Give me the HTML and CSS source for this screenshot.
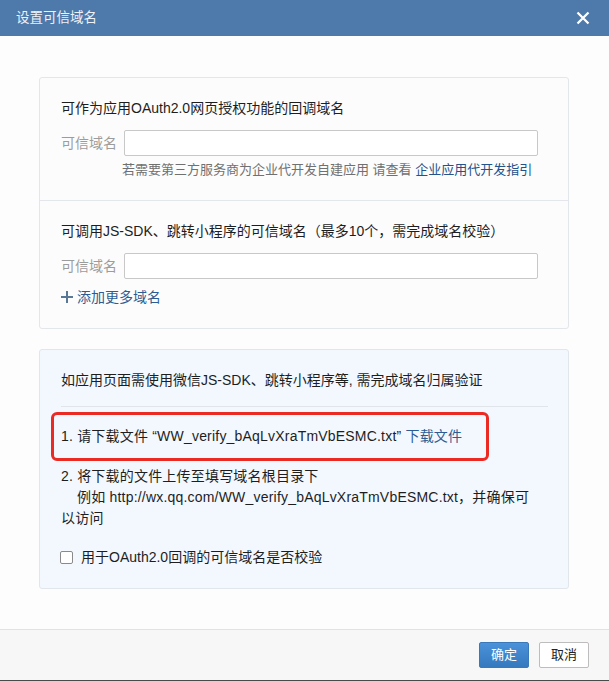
FILE: index.html
```html
<!DOCTYPE html>
<html lang="zh-CN">
<head>
<meta charset="utf-8">
<title>设置可信域名</title>
<link rel="stylesheet" href="styles.css">
</head>
<body>
<div class="dialog">
  <div class="header">
    <span class="title">设置可信域名</span>
    <span class="close">
      <svg width="14" height="14" viewBox="0 0 14 14"><path d="M1.5 1.5 L12.5 12.5 M12.5 1.5 L1.5 12.5" stroke="#fff" stroke-width="2.3" fill="none"/></svg>
    </span>
  </div>
  <div class="body">
    <div class="card">
      <div class="section">
        <div class="sec-title">可作为应用OAuth2.0网页授权功能的回调域名</div>
        <div class="field"><span class="label">可信域名</span><input class="input" type="text"></div>
        <div class="hint">若需要第三方服务商为企业代开发自建应用 请查看 <a class="link-dark">企业应用代开发指引</a></div>
      </div>
      <div class="section section-2">
        <div class="sec-title">可调用JS-SDK、跳转小程序的可信域名（最多10个，需完成域名校验）</div>
        <div class="field"><span class="label">可信域名</span><input class="input" type="text"></div>
        <div class="add">
          <svg class="plus" width="12" height="12" viewBox="0 0 12 12"><path d="M6 0 V12 M0 6 H12" stroke="#5a7896" stroke-width="2" fill="none"/></svg>
          <span>添加更多域名</span>
        </div>
      </div>
    </div>
    <div class="verify">
      <div class="v-title">如应用页面需使用微信JS-SDK、跳转小程序等, 需完成域名归属验证</div>
      <div class="v-divider"></div>
      <div class="step step-1">1. 请下载文件 “WW_verify_bAqLvXraTmVbESMC.txt” <a class="link">下载文件</a></div>
      <div class="step step-2">2. 将下载的文件上传至填写域名根目录下<br><span class="indent">例如 http://wx.qq.com/WW_verify_bAqLvXraTmVbESMC.txt，并确保可以访问</span></div>
      <div class="check"><span class="box"></span><span>用于OAuth2.0回调的可信域名是否校验</span></div>
    </div>
  </div>
  <div class="footer">
    <button class="btn btn-primary">确定</button>
    <button class="btn btn-default">取消</button>
  </div>
</div>
</body>
</html>
```
FILE: styles.css
```css
* { box-sizing: border-box; }
html, body { margin: 0; padding: 0; }
body {
  width: 609px;
  height: 681px;
  overflow: hidden;
  background: #fdfdfd;
  font-family: "Liberation Sans", "Noto Sans CJK SC", sans-serif;
  font-size: 14px;
  color: #222;
}
.dialog {
  width: 609px;
  height: 681px;
  display: flex;
  flex-direction: column;
  border-bottom: 1px solid #4a4a4a;
}
.header {
  height: 36px;
  background: #4d79ab;
  display: flex;
  align-items: center;
  justify-content: space-between;
  padding: 0 19px 0 16px;
}
.title {
  color: #eef2f7;
  font-size: 13.5px;
  line-height: 20px;
}
.close {
  display: flex;
  width: 14px;
  height: 14px;
}
.body {
  padding: 41px 40px 40px 39px;
  display: flex;
  flex-direction: column;
  gap: 20px;
}
.card {
  border: 1px solid #e3e6ea;
  border-radius: 3px;
  background: #fcfcfd;
}
.section {
  padding: 20px 30px 20px 21px;
}
.section-2 {
  border-top: 1px solid #e3e6ea;
  padding-bottom: 21px;
}
.sec-title {
  line-height: 20px;
  color: #1e1e1e;
}
.field {
  display: flex;
  align-items: center;
  gap: 7px;
  margin-top: 12px;
}
.label {
  width: 56px;
  color: #9c9c9c;
  line-height: 20px;
  white-space: nowrap;
}
.input {
  flex: 1;
  height: 26px;
  border: 1px solid #c8c8c8;
  border-radius: 2px;
  background: #fff;
  margin: 0;
  padding: 0 6px;
  font: inherit;
}
.hint {
  margin-top: 4px;
  padding-left: 61px;
  line-height: 20px;
  font-size: 13px;
  color: #707070;
  white-space: nowrap;
}
.link-dark { color: #24528a; text-decoration: none; }
.link { color: #2d5c93; text-decoration: none; }
.add {
  margin-top: 8px;
  display: flex;
  align-items: center;
  gap: 4px;
  line-height: 20px;
  color: #2d5c93;
}
.plus { display: block; }
.verify {
  border: 1px solid #e1e6ec;
  border-radius: 3px;
  background: #f2f8fe;
  padding: 20px 20px 20px 21px;
}
.v-title {
  line-height: 20px;
  color: #1e1e1e;
}
.v-divider {
  height: 1px;
  background: #e1e5ea;
  margin-top: 16px;
}
.step {
  line-height: 21px;
  color: #1e1e1e;
  letter-spacing: 0.2px;
}
.step-1 {
  margin-top: 19px;
  position: relative;
}
.step-1::after {
  content: "";
  position: absolute;
  left: -10px;
  top: -14px;
  width: 432px;
  height: 43px;
  border: 3px solid #ec2a24;
  border-radius: 6px;
}
.step-2 {
  margin-top: 19px;
  max-width: 482px;
}
.indent { padding-left: 16px; }
.check {
  margin-top: 18px;
  display: flex;
  align-items: center;
  gap: 8px;
  line-height: 21px;
  color: #1e1e1e;
}
.box {
  width: 13px;
  height: 13px;
  border: 1px solid #8a8a8a;
  border-radius: 2px;
  background: #fff;
  margin-left: -1px;
}
.footer {
  flex: 1;
  border-top: 1px solid #e2e2e2;
  background: #f7f7f7;
  display: flex;
  justify-content: flex-end;
  align-items: flex-start;
  gap: 10px;
  padding: 12px 20px 0 0;
}
.btn {
  width: 50px;
  height: 26px;
  border-radius: 2px;
  font-family: "Liberation Sans", "Noto Sans CJK SC", sans-serif;
  font-size: 13px;
  padding: 0;
  line-height: 24px;
}
.btn-primary {
  background: linear-gradient(#4a92da, #3579be);
  border: 1px solid #3a78ba;
  color: #fff;
}
.btn-default {
  background: #fff;
  border: 1px solid #bdbdbd;
  color: #222;
}
```
